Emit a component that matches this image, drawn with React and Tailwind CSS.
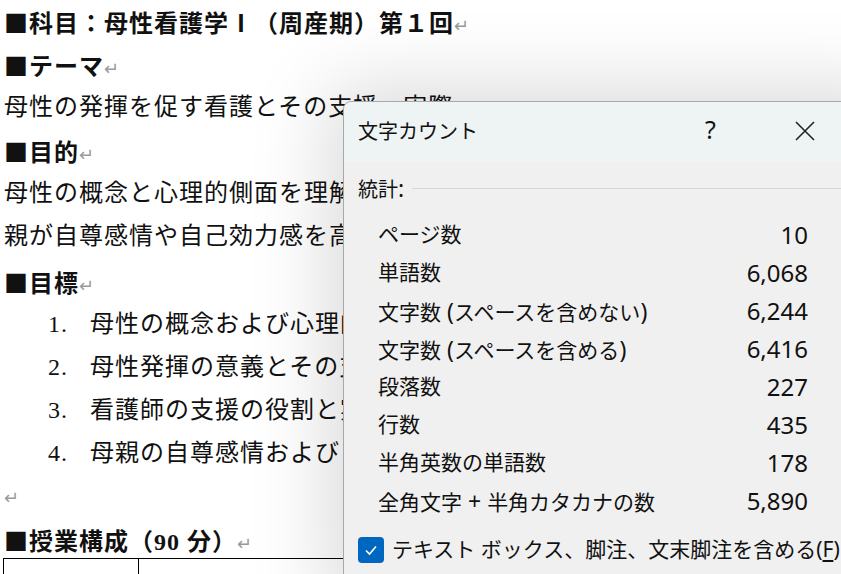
const ret = <span className="text-[#9a9a9a] text-[18px] font-normal">↵</span>;
const sq = <span style={{ fontFamily: '"Noto Sans CJK JP", sans-serif' }}>■</span>;

function DocLine({ children, className = "" }) {
  return <div className={`h-[43px] leading-[43px] whitespace-nowrap ${className}`}>{children}</div>;
}

// Latin parts of the dialog labels sit a bit larger than the kana
function Label({ text }) {
  return text.split(/([ -~]+)/).map((part, i) =>
    /^[ -~]+$/.test(part) ? (
      <span key={i} className="text-[23px]">{part}</span>
    ) : (
      <span key={i}>{part}</span>
    )
  );
}

const stats = [
  ["ページ数", "10"],
  ["単語数", "6,068"],
  ["文字数 (スペースを含めない)", "6,244"],
  ["文字数 (スペースを含める)", "6,416"],
  ["段落数", "227"],
  ["行数", "435"],
  ["半角英数の単語数", "178"],
  ["全角文字 + 半角カタカナの数", "5,890"],
];

const goals = [
  "母性の概念および心理的側面を理解する",
  "母性発揮の意義とその支援を理解する",
  "看護師の支援の役割と実際を理解する",
  "母親の自尊感情および自己効力感を理解する",
];

export default function App() {
  return (
    <div className="relative w-[841px] h-[574px] overflow-hidden bg-white">
      <div
        className="pl-[4px] text-[24px] text-[#111] tracking-[1px]"
        style={{ fontFamily: '"Liberation Serif", "Noto Sans CJK JP", serif' }}
      >
        <DocLine className="font-bold">{sq}科目：母性看護学Ⅰ（周産期）第１回{ret}</DocLine>
        <DocLine className="font-bold">{sq}テーマ{ret}</DocLine>
        <DocLine>母性の発揮を促す看護とその支援－実際</DocLine>
        <DocLine className="font-bold">{sq}目的{ret}</DocLine>
        <DocLine>母性の概念と心理的側面を理解し、母性発揮を促す看護を学ぶ</DocLine>
        <DocLine>親が自尊感情や自己効力感を高められる支援を考える</DocLine>
        <DocLine className="font-bold mt-[2px]">{sq}目標{ret}</DocLine>
        {goals.map((g, i) => (
          <DocLine key={i} className="flex">
            <span className="w-[86px] pl-[44px] shrink-0">{i + 1}.</span>
            <span>{g}</span>
          </DocLine>
        ))}
        <DocLine>{ret}</DocLine>
        <DocLine className="font-bold">{sq}授業構成（90 分）{ret}</DocLine>
        <div className="-mt-[3px] ml-[-1px] flex border-t border-l border-black h-[40px]">
          <div className="w-[135px] border-r border-black pl-[36px] pt-[10px] text-[22px]">時間</div>
          <div className="flex-1"></div>
        </div>
      </div>

      <div
        className="absolute left-[343px] top-[101px] w-[540px] h-[500px] rounded-tl-[8px] border border-[#a8a8a8] bg-[#f0f0f0] shadow-[0_0_80px_14px_rgba(0,0,0,0.15)] text-[#111]"
        style={{ fontFamily: '"Noto Sans", "Noto Sans CJK JP", sans-serif' }}
      >
        <div className="h-[60px] rounded-tl-[8px] bg-[#eef3f3] flex items-center pl-[14px]">
          <span className="text-[20px]">文字カウント</span>
          <span className="absolute left-[361px] top-[9px] text-[25px]">?</span>
          <svg className="absolute left-[450px] top-[18px]" width="22" height="22" viewBox="0 0 22 22">
            <path d="M2 2 L20 20 M20 2 L2 20" stroke="#222" strokeWidth="1.6" />
          </svg>
        </div>
        <div className="flex items-center pl-[14px] mt-[11px] h-[30px]">
          <span className="text-[20px]">統計<span className="text-[23px]">:</span></span>
          <div className="flex-1 h-px bg-[#d6d6d6] ml-[8px]"></div>
        </div>
        <div className="ml-[34px] w-[430px] mt-[13px]">
          {stats.map(([k, v]) => (
            <div key={k} className="h-[38px] flex items-center justify-between text-[21px]">
              <span><Label text={k} /></span>
              <span className="text-[24px]">{v}</span>
            </div>
          ))}
        </div>
        <div className="flex items-center pl-[14px] mt-[14px]">
          <div className="w-[26px] h-[26px] rounded-[4px] bg-[#0067c0] flex items-center justify-center">
            <svg width="14" height="14" viewBox="0 0 14 14">
              <path d="M2 7.5 L5.5 11 L12 3.5" stroke="white" strokeWidth="1.6" fill="none" />
            </svg>
          </div>
          <span className="ml-[8px] text-[21px] whitespace-nowrap">
            テキスト ボックス、脚注、文末脚注を含める(<span className="underline underline-offset-[3px]">F</span>)
          </span>
        </div>
      </div>
    </div>
  );
}
